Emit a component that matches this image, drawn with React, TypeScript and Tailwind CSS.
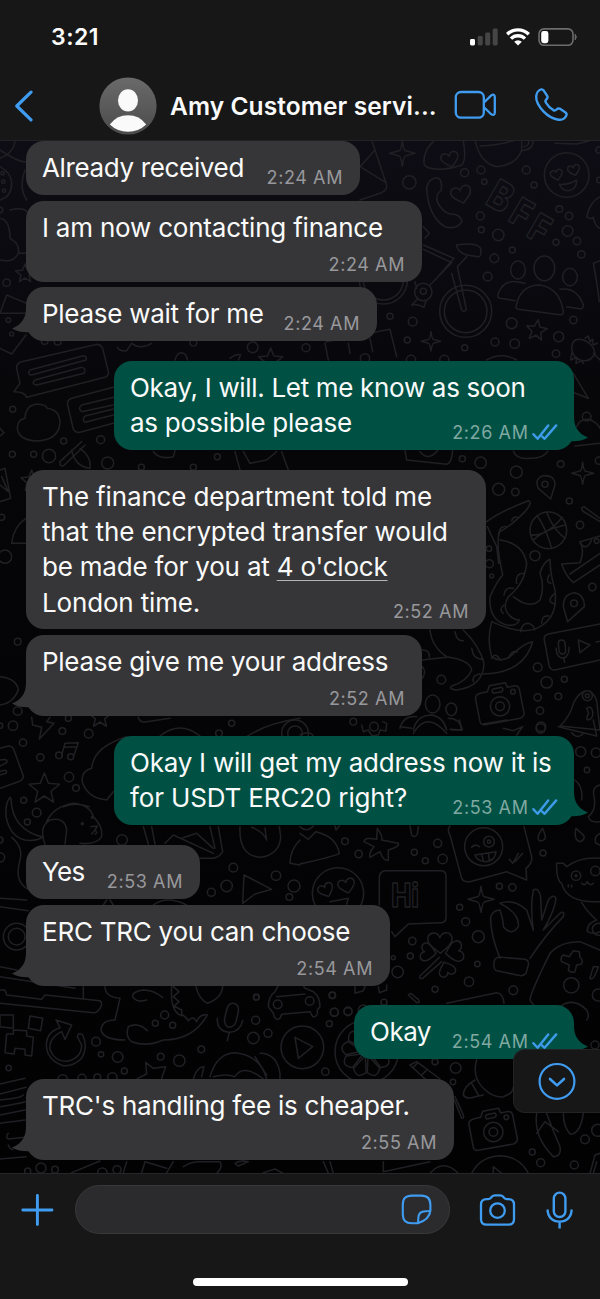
import React from "react";

type Pt = [number, number, number];

function Dots({ items }: { items: Pt[] }) {
  return (
    <>
      {items.map(([x, y, r], i) => (
        <circle key={i} cx={x} cy={y} r={r} />
      ))}
    </>
  );
}

function Panel({ x, y, children }: { x: number; y: number; children: React.ReactNode }) {
  return <g transform={`translate(${x} ${y}) scale(0.33333)`}>{children}</g>;
}

function Heart({ x, y, s, r = -15 }: { x: number; y: number; s: number; r?: number }) {
  const k = s / 30;
  return (
    <path
      transform={`translate(${x} ${y}) rotate(${r}) scale(${k})`}
      strokeWidth={4.6 / k}
      d="M0 26C-15 14 -30 4 -29 -9C-27 -26 -6 -27 0 -11C6 -27 27 -26 29 -9C30 4 15 14 0 26Z"
    />
  );
}

function Star({ x, y, s, r = 0 }: { x: number; y: number; s: number; r?: number }) {
  const k = s / 30;
  return (
    <path
      transform={`translate(${x} ${y}) rotate(${r}) scale(${k})`}
      strokeWidth={4.6 / k}
      d="M0 -30L8 -10L30 -8L13 6L18 27L0 15L-18 27L-13 6L-30 -8L-8 -10Z"
    />
  );
}

function Sparkle({ x, y, s }: { x: number; y: number; s: number }) {
  const k = s / 30;
  return (
    <path
      transform={`translate(${x} ${y}) scale(${k})`}
      strokeWidth={4.6 / k}
      d="M0 -30Q3 -6 8 -6L30 0L8 6Q4 6 0 30Q-4 6 -8 6L-30 0L-8 -6Q-3 -6 0 -30Z"
    />
  );
}

function DoodleCamera({ x, y }: { x: number; y: number }) {
  return (
    <g transform={`translate(${x - 300} ${y - 829})`}>
      <path d="M240 790Q224 796 227 808L240 875Q243 886 255 884L360 865Q373 860 372 848L358 778Q355 765 340 768L322 772L316 758L268 767L262 785Z" />
      <path d="M280 777L305 772Q312 778 305 785L280 790Q273 782 280 777Z" />
      <Dots items={[[300, 829, 29], [300, 829, 13], [339, 785, 7]]} />
    </g>
  );
}

function Letter({ x, y, size, rotate, children }: { x: number; y: number; size: number; rotate: number; children: string }) {
  return (
    <text
      transform={`translate(${x} ${y}) rotate(${rotate}) scale(0.82 1)`}
      textAnchor="middle"
      dominantBaseline="central"
      fontFamily="Inter, sans-serif"
      fontWeight="800"
      fontSize={size}
    >
      {children}
    </text>
  );
}

function Wallpaper() {
  return (
    <svg
      className="absolute inset-0 h-full w-full"
      viewBox="0 141 600 1032"
      preserveAspectRatio="none"
      fill="none"
      stroke="#202024"
      strokeWidth="4.6"
      strokeLinecap="round"
      strokeLinejoin="round"
      aria-hidden="true"
    >
      <Panel x={0} y={130}>
        <path d="M45 35Q40 70 0 85M0 60Q60 100 80 95M0 110Q35 130 35 160Q35 200 0 210M75 120Q55 170 80 210M0 265Q30 270 30 325Q60 340 55 370Q40 400 0 390M30 240Q70 230 80 245M55 370L80 370" />
        <Dots items={[[8, 130, 5], [10, 155, 5], [12, 182, 5], [0, 240, 8]]} />
      </Panel>
      <Panel x={300} y={130}>
        <Dots
          items={[
            [328, 157, 20], [494, 128, 12], [543, 120, 12], [553, 155, 8], [679, 120, 12], [702, 165, 9], [541, 258, 12], [544, 299, 9],
            [595, 315, 17], [583, 385, 13], [637, 360, 9], [563, 440, 13], [778, 237, 10], [807, 258, 11], [803, 303, 16], [768, 337, 9],
            [831, 333, 11], [844, 373, 11], [270, 559, 9], [338, 575, 13], [322, 630, 9], [494, 653, 9], [585, 636, 12], [644, 641, 14],
            [635, 580, 16], [820, 570, 11], [776, 620, 15], [768, 671, 11], [333, 690, 14], [433, 690, 14], [195, 685, 14], [18, 653, 12],
            [800, 135, 67], [497, 544, 78], [497, 544, 64], [250, 450, 72], [250, 450, 60], [370, 484, 9], [370, 486, 26], [898, 60, 10],
            [898, 150, 8], [860, 860, 13],
          ]}
        />
        <Sparkle x={307} y={70} s={38} />
        <Sparkle x={393} y={634} s={29} />
        <Heart x={450} y={88} s={27} />
        <Heart x={484} y={193} s={31} />
        <Heart x={770} y={134} s={19} />
        <Heart x={822} y={120} s={19} />
        <Star x={710} y={600} s={31} r={8} />
        <path d="M215 30L260 165Q262 180 245 188L180 210M225 60L180 110L258 158" />
        <path d="M372 100Q370 60 400 35M490 35Q500 90 485 105Q430 125 385 113Q372 108 372 100" />
        <path d="M525 30Q540 100 590 110Q650 105 665 60L665 30M540 48Q600 45 640 32M665 62Q700 60 700 30M672 50Q690 45 685 32M765 40L830 42L870 32" />
        <path d="M778 163Q805 165 830 150Q830 180 805 182Q785 182 778 163Z" />
        <path d="M380 175Q385 145 410 143Q428 145 424 180Q405 195 412 215Q425 245 450 252Q480 250 486 275Q470 300 435 290Q385 260 380 175Z" />
        <path d="M370 345L462 385L405 450M370 358L455 398L390 465M455 430L485 540Q493 548 499 538L472 410L500 380M470 345Q530 335 542 355Q545 380 535 380L500 375Q470 365 470 345ZM355 505L335 525Q350 520 372 532L378 512M345 455L350 475M370 290L388 310L375 325" />
        <ellipse cx="654" cy="420" rx="22" ry="27" />
        <ellipse cx="733" cy="415" rx="31" ry="37" />
        <ellipse cx="810" cy="441" rx="22" ry="26" />
        <path d="M648 530Q660 465 720 465Q780 475 790 545Q790 555 780 554L655 538Q646 536 648 530ZM645 512L600 505Q590 505 595 490Q610 450 650 455L675 460M780 478Q830 470 850 525Q850 538 840 536L800 530" />
        <path d="M75 640L85 690M78 635L270 598L290 680M145 640L150 670M210 625L218 665M560 690Q605 665 650 690" />
        <path d="M815 650Q820 620 850 630Q880 640 885 670Q870 700 840 690Q815 680 815 650ZM880 670L900 690M855 625L865 618L870 635L878 628L880 645L892 640M815 670L812 690L830 682L828 700L845 692L850 700M820 730L865 805L800 780M830 890Q840 865 865 868Q890 875 900 895" />
        <path d="M900 200Q870 215 860 260Q870 270 880 262Q885 290 900 295M900 392L880 400Q890 450 898 515" />
        <Letter x={603} y={198} size={122} rotate={30}>B</Letter>
        <Letter x={666} y={247} size={114} rotate={30}>F</Letter>
        <Letter x={720} y={293} size={114} rotate={30}>F</Letter>
      </Panel>
      <Panel x={0} y={260}>
        <Dots
          items={[
            [38, 448, 9], [37, 583, 9], [101, 583, 9], [147, 588, 20], [191, 543, 9], [302, 539, 12], [323, 609, 18], [424, 622, 9],
            [580, 622, 9], [652, 590, 9], [758, 262, 16], [20, 68, 11], [25, 180, 7], [35, 222, 6], [134, 243, 10], [173, 245, 10],
            [580, 248, 10], [5, 772, 9], [15, 890, 20],
          ]}
        />
        <Star x={75} y={40} s={28} />
        <Star x={812} y={300} s={36} />
        <Star x={95} y={662} s={32} />
        <path d="M20 105L0 160M20 105L80 130M0 160L75 160M0 265L35 282L78 225M0 505L12 518L0 528" />
        <path d="M65 305Q48 310 50 325L60 370L42 395Q75 395 80 412L315 352Q328 345 325 335L308 265Q300 250 285 254ZM90 330L250 287Q262 288 258 300L95 345Q80 343 90 330ZM105 360L245 322Q260 325 252 340L110 375Q92 372 105 360Z" />
        <path d="M340 382L215 415Q200 420 203 435L220 508Q228 520 240 517L340 490M340 412L245 435Q232 445 245 455L340 435M340 447L255 468Q245 478 255 487L340 465" />
        <path d="M75 475Q75 440 105 433Q135 430 142 445Q180 450 180 490Q175 540 110 543Q55 540 52 505Q52 480 75 475Z" />
        <path d="M245 545L180 605Q178 620 190 618L255 555M215 570Q225 620 270 625Q275 590 240 565M0 630L15 625L32 715L0 725M0 675L25 695L5 650M35 850Q40 800 78 775M78 850L35 850" />
        <path d="M352 262Q360 275 380 272L395 250M395 250Q420 270 455 250M525 300Q530 278 545 278Q560 280 562 300M690 295Q710 280 722 285L715 300M705 575L720 630M730 575L750 610L800 600L830 575M845 575L865 630M460 575Q480 600 520 590L525 572" />
      </Panel>
      <Panel x={400} y={430}>
        <Dots
          items={[
            [187, 86, 9], [242, 98, 17], [349, 126, 18], [296, 178, 18], [346, 186, 11], [482, 102, 10], [508, 213, 9], [540, 285, 11],
            [405, 377, 15], [268, 401, 12], [267, 356, 8], [275, 438, 6], [577, 471, 11], [413, 712, 13], [440, 757, 17], [493, 748, 9],
            [413, 802, 11], [475, 799, 10], [420, 842, 11], [423, 890, 14], [124, 749, 13], [435, 163, 9], [522, 520, 10], [445, 301, 55],
            [562, 797, 15], [562, 797, 6], [597, 92, 11], [590, 333, 7],
          ]}
        />
        <Sparkle x={548} y={130} s={33} />
        <path d="M15 62L20 90L140 103Q155 100 158 62M60 65Q85 95 112 62M340 64Q350 90 390 85Q430 85 443 64M525 48L600 40" />
        <path d="M452 207L415 175Q402 145 430 137Q465 135 465 165ZM503 575L490 530Q490 490 525 488Q555 495 553 530Z" />
        <path d="M392 315Q440 320 487 262M412 257Q440 300 455 355M440 247Q460 300 495 325M400 330Q430 300 495 285" />
        <path d="M260 275Q300 245 385 212Q400 215 375 245Q330 290 300 305Q285 330 308 435Q290 455 270 500Q265 570 320 585Q350 590 358 570M262 290L290 350L296 400M300 330Q370 340 380 400Q375 460 325 500Q310 525 320 545Q335 570 358 570M340 500Q390 540 420 510Q435 470 420 430Q430 395 450 388Q450 430 465 480Q475 560 420 590Q370 620 275 575Q260 630 275 680Q300 700 330 680Q370 640 398 635Q370 730 250 732" />
        <path d="M295 315Q300 285 320 290M350 460Q345 430 372 430M312 495Q315 470 340 475M465 522Q435 515 465 490M362 605Q365 580 385 580Q402 585 404 600M425 580Q425 555 447 558M310 550Q295 540 312 525M275 685Q285 665 300 688M325 685Q335 660 352 665M335 272Q340 258 352 262M452 460Q435 455 448 435" />
        <path d="M90 600Q95 650 140 680Q210 690 215 720Q200 755 155 768Q145 778 170 780Q250 770 252 700Q240 650 190 600M67 690L140 682M165 605Q170 635 190 632M215 655Q220 690 250 688M220 755Q215 735 240 732M67 660Q90 660 88 682M67 710Q80 725 67 745" />
        <path d="M485 402L540 398Q555 360 540 335L600 318M485 402Q495 435 520 458L600 405M510 432L600 370M540 340Q560 365 575 330M600 265L552 230Q540 232 548 243L600 275" />
        <path d="M445 612Q430 617 433 630L448 710Q455 722 465 720L600 690M445 612L600 582M475 640Q475 630 484 630Q494 630 495 640L497 660Q497 672 488 672Q478 672 477 660ZM468 655Q470 685 490 684Q508 680 507 652M491 684L494 697M535 630L570 645L540 668ZM588 636L600 634" />
        <DoodleCamera x={300} y={829} />
        <path d="M480 888Q510 860 520 820Q535 790 555 783M570 783Q592 800 592 830L600 900L480 888M560 835Q575 825 578 845Q580 870 562 870Q558 860 566 850Z" />
        <ellipse cx="98" cy="822" rx="22" ry="27" />
        <ellipse cx="154" cy="838" rx="16" ry="19" />
        <path d="M40 900Q50 855 95 855Q130 860 140 900M145 865Q180 865 187 900L150 898M0 895Q10 855 50 860" />
      </Panel>
      <Panel x={0} y={640}>
        <Dots
          items={[
            [53, 213, 13], [39, 257, 14], [0, 257, 8], [187, 273, 10], [266, 281, 13], [69, 308, 11], [121, 352, 11], [207, 411, 14],
            [228, 444, 10], [71, 481, 9], [110, 518, 13], [82, 546, 9], [366, 600, 16], [700, 683, 13], [680, 738, 17], [634, 757, 12],
            [828, 707, 14], [868, 771, 10], [882, 738, 18], [695, 250, 9], [657, 280, 10], [205, 235, 9], [53, 5, 10], [177, 346, 10],
            [212, 350, 9], [247, 551, 3], [277, 532, 3], [50, 890, 40], [50, 890, 25], [0, 600, 9], [0, 652, 14], [885, 280, 40], [885, 280, 22],
          ]}
        />
        <Star x={300} y={230} s={32} />
        <Star x={133} y={445} s={46} />
        <path d="M0 110Q50 115 55 150Q40 190 0 195M95 232L98 255L125 262L118 297L162 250L140 245L150 232M185 345L195 310L235 308L222 345M195 322L230 320" />
        <path d="M0 325L25 318Q38 318 42 330L70 408Q70 420 55 425L0 445M0 360Q25 355 20 368L0 378M0 395Q25 385 18 400L0 405M415 232Q420 250 440 245L510 235M740 290Q800 250 900 235" />
        <path d="M380 290Q280 320 275 385Q240 395 248 430Q265 475 320 480L340 455M480 288Q540 240 600 288" />
        <path d="M30 472Q15 490 18 530Q30 590 75 600Q110 605 130 590M33 475Q35 570 130 592M195 612L200 570Q195 530 150 540Q115 560 135 612M140 545Q160 500 220 490Q270 495 280 530Q310 560 305 590Q290 615 240 610M35 592Q70 620 60 660Q40 730 90 750M190 500Q230 485 268 500M272 560L292 558L285 570Q295 580 285 582M285 570L275 582" />
        <path d="M430 560L445 612M455 560L465 612M495 610L520 585L640 640M545 595L590 580L640 625M655 560L668 635Q660 650 640 655L600 655M630 560L645 625M720 560Q715 650 785 652Q840 640 842 590L838 560M755 562Q790 575 800 600L795 565M900 600Q870 630 870 670L900 675" />
        <path d="M732 705L815 748L765 762L728 790ZM0 775L80 780M0 800L85 812M320 780L310 795M330 780L340 795M460 795Q500 765 560 795" />
      </Panel>
      <Panel x={300} y={720}>
        <Dots
          items={[
            [222, 20, 13], [160, 5, 10], [722, 25, 14], [842, 95, 15], [888, 98, 14], [861, 150, 8], [135, 364, 10], [176, 402, 11],
            [343, 397, 9], [376, 422, 9], [413, 370, 12], [428, 417, 14], [729, 399, 9], [598, 499, 9], [637, 502, 11], [479, 562, 9],
            [497, 605, 12], [535, 650, 18], [337, 663, 11], [331, 708, 9], [293, 756, 17], [532, 732, 8], [507, 785, 14], [405, 808, 9],
            [640, 811, 13], [814, 796, 23], [97, 826, 10], [103, 877, 12], [144, 875, 12], [190, 870, 15], [895, 825, 18], [280, 713, 6],
            [551, 380, 57], [567, 365, 16], [567, 365, 5], [114, 520, 77], [828, 467, 14], [886, 453, 14], [828, 467, 3], [895, 628, 18],
          ]}
        />
        <path d="M185 15L190 35L205 30L215 47L235 45L240 30L258 33L260 10L248 5M300 20L335 25M340 40Q380 -30 440 40M455 30L485 30L478 0M550 12L620 0M610 25L640 32L668 20L650 45M775 20L890 48L880 0M815 38Q835 60 850 40M0 45Q30 30 40 48M825 180Q850 200 845 240M900 195Q875 200 882 230Q890 270 865 290Q870 310 900 305" />
        <path d="M0 340L25 358L48 335Q110 350 118 400Q100 410 0 432M105 318L108 330L118 318M0 320Q20 340 40 318" />
        <path d="M232 325Q250 350 245 360L295 370Q300 380 265 390L265 420Q250 425 240 395L210 412Q205 400 222 380L192 365Q195 350 230 358ZM330 318L335 345Q345 355 352 342L355 320" />
        <path d="M450 318Q440 330 450 345L485 475Q490 488 510 485L620 455L680 480L678 445Q698 430 695 410L672 320M515 382Q525 370 538 380M525 405L588 395Q585 425 555 425Q530 422 525 405M545 403L550 422M565 400L568 420M628 418L638 430L655 400M645 425L668 400" />
        <path d="M728 325Q705 355 720 363Q740 362 735 345ZM828 325Q820 360 840 365Q858 358 850 345ZM900 340Q880 350 888 370L900 375" />
        <Heart x={78} y={510} s={24} r={-25} />
        <Heart x={140} y={497} s={26} />
        <path d="M90 545L145 535L140 552M255 452H425Q438 454 438 468V595Q436 608 422 608L325 612L285 650L275 635M238 555V470Q240 454 255 452" />
        <path d="M790 430L770 430Q768 480 785 490Q800 550 900 545M790 430L800 440Q840 410 900 415M845 548Q865 580 890 600Q860 610 862 635Q880 645 900 635M845 490Q855 500 862 485Q870 500 880 490M805 495v6M815 495v6" />
        <Sparkle x={543} y={538} s={39} />
        <path d="M600 715Q570 640 572 590Q580 570 600 570Q610 600 610 620Q635 650 655 620Q660 580 600 550Q640 535 680 570L700 630Q690 560 700 510Q715 500 722 530L725 600L745 540Q760 520 768 535Q765 570 730 630L780 580Q795 570 790 590Q740 640 690 715M583 722Q590 708 605 712L675 718Q688 722 685 735L678 760Q670 770 655 766L590 752Q578 748 583 722" />
        <Heart x={420} y={667} s={38} r={-2} />
        <Heart x={384} y={697} s={28} r={-80} />
        <Heart x={464} y={695} s={32} r={78} />
        <Heart x={440} y={748} s={26} r={160} />
        <path d="M418 712L360 768Q355 778 368 775L425 725" />
        <path d="M690 840Q690 820 750 700Q780 665 840 665L900 690M690 840Q700 860 720 865M780 860Q820 830 860 870Q870 890 860 900M820 692L838 695L840 712Q850 718 845 732L830 735L825 755Q812 760 805 750L808 735L785 725Q780 710 790 705L808 710ZM880 740L870 775Q880 785 895 740Z" />
        <path d="M325 825L350 848Q362 850 355 838L332 820ZM440 850L590 818Q610 820 612 850M165 800V820L190 812L195 800M235 800L238 818L260 810V795" />
        <Letter x={315} y={525} size={98} rotate={0}>Hi</Letter>
      </Panel>
      <Panel x={0} y={960}>
        <Dots
          items={[
            [466, 190, 9], [494, 165, 12], [518, 196, 9], [288, 245, 13], [303, 283, 8], [353, 291, 16], [373, 333, 9], [482, 290, 10],
            [538, 302, 17], [604, 268, 10], [760, 234, 17], [767, 181, 12], [804, 220, 12], [769, 112, 8], [26, 324, 8], [246, 355, 12],
            [292, 352, 10], [337, 352, 14], [188, 358, 14], [123, 624, 15], [83, 633, 9], [165, 629, 10], [307, 638, 14], [351, 629, 12],
          ]}
        />
        <path d="M0 50L225 85M0 90L15 90L20 105L125 118L135 105L300 122Q310 130 300 145Q290 160 280 158L0 130M250 80V115M0 20L50 30" />
        <path d="M0 165L40 165L40 205L0 200ZM90 168L128 175L122 212L85 205ZM40 210L80 212L80 228L100 232L95 288L75 285L75 268L45 265L42 282L15 278L20 222L40 222Z" />
        <path d="M168 180L215 195L195 238L185 215Q145 235 150 270Q165 305 200 304Q245 295 245 255L232 230Q235 215 248 225Q265 260 245 295Q220 320 190 317Q140 300 139 255Q140 215 180 203Z" />
        <path d="M315 80Q315 110 360 115L345 180Q305 180 303 210Q310 240 375 240M488 112Q460 90 430 90Q395 95 398 110Q410 130 440 120M442 212Q415 185 385 200Q375 230 395 245Q440 262 490 240Q580 240 622 165Q600 160 590 185Q580 165 565 182Q550 160 540 165Q510 150 515 80M520 80L537 95L520 110L537 125L522 138L545 150L545 168M588 80Q595 115 622 130Q665 115 668 80" />
        <path d="M680 150Q685 128 700 130Q718 133 715 155L708 185Q700 205 682 200Q670 190 675 170ZM652 175Q650 215 690 217Q720 215 728 182M688 217L682 242" />
        <path d="M412 355L440 342L437 307L460 325L497 320L485 355M580 357Q590 320 612 320L605 350M630 350Q650 280 705 278Q780 285 800 357M640 350Q680 340 705 350Q730 310 790 357M765 290Q790 330 800 345M780 280Q830 280 840 340V357" />
        <path d="M0 372L75 355M0 402L78 382M25 520Q15 530 25 537L75 532M0 420Q60 415 70 405M0 440Q60 430 75 425M0 465L75 450M0 490L75 480M25 555Q30 570 40 568M0 597L78 590M215 638L300 603M380 605L370 638M435 605L425 638M520 605L500 638M435 605L500 625M550 620Q570 605 600 605L660 605Q670 620 650 640M705 610Q720 600 745 605L715 618ZM790 638L825 627L850 640" />
      </Panel>
      <Panel x={190} y={820}>
        <Dots
          items={[
            [263, 553, 13], [359, 543, 13], [199, 531, 9], [427, 526, 9], [433, 577, 12], [474, 573, 12], [418, 611, 9], [582, 547, 9],
            [406, 755, 11], [337, 682, 64],
          ]}
        />
        <path d="M235 560Q235 530 255 515L265 497M390 560Q390 530 370 515L345 505L340 497M260 530L345 522M235 560L250 580Q255 605 270 595L275 583L360 575L368 590Q385 592 382 570L390 560M315 652L368 680L325 715Z" />
      </Panel>
      <Panel x={300} y={980}>
        <Dots
          items={[
            [467, 264, 16], [459, 306, 8], [697, 516, 9], [722, 548, 12], [823, 555, 12], [855, 478, 13], [893, 451, 18], [200, 215, 95],
            [885, 195, 12], [405, 245, 9],
          ]}
        />
        {[0, 40, 80, 120, 160, 200, 240, 280, 320].map((a) => (
          <path key={a} transform={`translate(200 215) rotate(${a})`} d="M0 -12L-20 -60Q0 -90 20 -60Z" />
        ))}
        <path d="M330 255L400 320M350 245L420 297M340 262L352 250M365 285L378 272M330 255L350 245M463 360L485 415Q495 415 488 400L465 350" />
        <path d="M530 240Q515 290 550 325Q580 355 610 350Q640 340 640 320M525 300Q490 320 490 345Q500 360 525 350L550 345M515 310L535 345" />
        <DoodleCamera x={580} y={456} />
        <path d="M710 400Q700 470 760 530Q785 530 780 500Q750 430 740 400M710 460L735 425L775 455M790 400Q790 440 810 462Q840 465 850 400" />
        <path d="M250 545L250 575L390 545M70 545L85 580M90 545L100 580M390 580Q430 535 475 580M515 580Q540 530 600 527Q660 530 685 580M580 560V580M580 560L605 580M870 580L885 525L900 520M890 545L880 580" />
      </Panel>
    </svg>
  );
}

function Ticks() {
  return (
    <svg className="h-[17px] w-[26px]" viewBox="0 0 26 17" fill="none" stroke="#3d9be9" strokeWidth="2.4" strokeLinecap="round" strokeLinejoin="round" aria-hidden="true">
      <path d="M1.4 10.2L5.6 14.8L16.2 1.4M10.2 12.6L12.6 14.8L24.2 1.4" />
    </svg>
  );
}

type Line = { text: string; track: string; mark?: string };

interface Message {
  mine?: boolean;
  tail?: boolean;
  box: string;
  lines: Line[];
  time: string;
}

const messages: Message[] = [
  { box: "w-[334px] h-[54px]", lines: [{ text: "Already received", track: "tracking-[-0.35px]" }], time: "2:24 AM" },
  { box: "mt-[6px] w-[396px] h-[81px]", lines: [{ text: "I am now contacting finance", track: "tracking-[-0.21px]" }], time: "2:24 AM" },
  { tail: true, box: "mt-[5px] w-[351px] h-[54px]", lines: [{ text: "Please wait for me", track: "tracking-[-0.27px]" }], time: "2:24 AM" },
  {
    mine: true,
    tail: true,
    box: "mt-[20px] w-[460px] h-[89px]",
    lines: [
      { text: "Okay, I will. Let me know as soon", track: "tracking-[-0.32px]" },
      { text: "as possible please", track: "tracking-[-0.27px]" },
    ],
    time: "2:26 AM",
  },
  {
    box: "mt-[20px] w-[460px] h-[159px]",
    lines: [
      { text: "The finance department told me", track: "tracking-[-0.14px]" },
      { text: "that the encrypted transfer would", track: "tracking-[-0.14px]" },
      { text: "be made for you at ", mark: "4 o'clock", track: "tracking-[-0.2px]" },
      { text: "London time.", track: "tracking-[-0.16px]" },
    ],
    time: "2:52 AM",
  },
  { tail: true, box: "mt-[6px] w-[396px] h-[81px]", lines: [{ text: "Please give me your address", track: "tracking-[-0.28px]" }], time: "2:52 AM" },
  {
    mine: true,
    tail: true,
    box: "mt-[20px] w-[460px] h-[89px]",
    lines: [
      { text: "Okay I will get my address now it is", track: "tracking-[-0.24px]" },
      { text: "for USDT ERC20 right?", track: "tracking-[-0.15px]" },
    ],
    time: "2:53 AM",
  },
  { box: "mt-[20px] w-[174px] h-[54px]", lines: [{ text: "Yes", track: "tracking-[-0.6px]" }], time: "2:53 AM" },
  { tail: true, box: "mt-[6px] w-[364px] h-[81px]", lines: [{ text: "ERC TRC you can choose", track: "tracking-[-0.24px]" }], time: "2:54 AM" },
  { mine: true, tail: true, box: "mt-[19px] w-[220px] h-[54px]", lines: [{ text: "Okay", track: "tracking-[-0.5px]" }], time: "2:54 AM" },
  { tail: true, box: "mt-[20px] w-[428px] h-[81px]", lines: [{ text: "TRC's handling fee is cheaper.", track: "tracking-[-0.23px]" }], time: "2:55 AM" },
];

function Bubble({ mine, tail, box, lines, time }: Message) {
  return (
    <div
      className={`relative grid shrink-0 rounded-[18px] pt-[9px] pb-[6px] pl-[16px] ${box} ${
        mine ? "self-end bg-[#005144] pr-[16px]" : "self-start bg-[#363638] pr-[17px]"
      }`}
    >
      {tail && (
        <svg
          className={`absolute bottom-0 h-[34px] w-[34px] ${mine ? "-right-[14px] -scale-x-100" : "-left-[14px]"}`}
          viewBox="0 0 34 34"
          fill={mine ? "#005144" : "#363638"}
          aria-hidden="true"
        >
          <path d="M14 0C14 10 11 17 0 21.5C5 25 12 25.5 18 25.2L32 34V0Z" />
        </svg>
      )}
      <div className="relative col-start-1 row-start-1 text-[26px] leading-[35.2px] whitespace-pre text-[#fafafa]">
        {lines.map((l) => (
          <p key={l.text} className={l.track}>
            {l.text}
            {l.mark && <span className="underline decoration-[#b4b4b6] decoration-1 underline-offset-[4px]">{l.mark}</span>}
          </p>
        ))}
      </div>
      <div
        className={`relative col-start-1 row-start-1 flex items-end gap-[3.5px] self-end justify-self-end text-[18px] leading-[22px] tracking-[0.6px] whitespace-nowrap ${
          mine ? "text-[#7fa8a1]" : "text-[#98989c]"
        }`}
      >
        <span>{time}</span>
        {mine && (
          <div className="flex pb-[3px]">
            <Ticks />
          </div>
        )}
      </div>
    </div>
  );
}

function StatusBar() {
  return (
    <div className="flex h-[74px] items-center justify-between pr-[22px] pl-[51px]">
      <span className="text-[23px] leading-[28px] font-semibold tracking-[0.5px]">3:21</span>
      <div className="flex items-center gap-[8px]">
        <svg className="h-[18px] w-[28px]" viewBox="0 0 28 18" aria-hidden="true">
          <rect x="0" y="11" width="5" height="6.5" rx="1.4" fill="#fff" />
          <rect x="7.7" y="8" width="5" height="9.5" rx="1.4" fill="#454545" />
          <rect x="15.2" y="4.5" width="5" height="13" rx="1.4" fill="#454545" />
          <rect x="22.7" y="0.5" width="5" height="17" rx="1.4" fill="#454545" />
        </svg>
        <svg className="h-[18px] w-[24px]" viewBox="0 0 24 18" fill="none" stroke="#fff" strokeWidth="3.4" aria-hidden="true">
          <path d="M1.2 6.3A15.4 15.4 0 0 1 22.8 6.3" />
          <path d="M5 10.6A10 10 0 0 1 19 10.6" />
          <path d="M12 17.6L8.2 13.8A5.4 5.4 0 0 1 15.8 13.8Z" fill="#fff" stroke="none" />
        </svg>
        <svg className="h-[18px] w-[40px]" viewBox="0 0 40 18" fill="none" aria-hidden="true">
          <rect x="1" y="0.9" width="34" height="16.4" rx="5" stroke="#6c6c6c" strokeWidth="1.6" />
          <rect x="3.2" y="3" width="7.2" height="12.2" rx="2.4" fill="#fff" />
          <path d="M37.2 6.3Q39.4 9 37.2 11.8Z" fill="#6c6c6c" stroke="#6c6c6c" />
        </svg>
      </div>
    </div>
  );
}

function ChatHeader() {
  return (
    <div className="flex h-[63px] items-center">
      <svg className="ml-[13px] h-[32px] w-[22px]" viewBox="0 0 22 32" fill="none" stroke="#3f9cf0" strokeWidth="3.2" strokeLinecap="round" strokeLinejoin="round" aria-hidden="true">
        <path d="M18 2.2L3.8 16L18 29.8" />
      </svg>
      <svg className="ml-[64px] h-[58px] w-[58px]" viewBox="0 0 58 58" aria-hidden="true">
        <defs>
          <linearGradient id="avatarFill" x1="0" y1="0" x2="0" y2="1">
            <stop offset="0" stopColor="#6a6a6a" />
            <stop offset="1" stopColor="#4b4b4b" />
          </linearGradient>
        </defs>
        <circle cx="29" cy="29" r="28.6" fill="url(#avatarFill)" />
        <ellipse cx="29" cy="23.4" rx="10" ry="11.2" fill="#fafafa" />
        <path d="M10.8 47.5Q17.5 38.3 29 38.3T47.2 47.5Q39.5 54.8 29 54.8T10.8 47.5Z" fill="#fafafa" />
      </svg>
      <h1 className="ml-[13px] w-[284px] text-[24.5px] leading-[32px] font-semibold tracking-[0.1px] whitespace-nowrap">Amy Customer servi...</h1>
      <svg className="h-[30px] w-[44px] -translate-y-px" viewBox="0 0 44 30" fill="none" stroke="#3f9cf0" strokeWidth="2.3" strokeLinejoin="round" aria-hidden="true">
        <rect x="1.8" y="2" width="28" height="25.6" rx="5.2" />
        <path d="M30 12.5L37.2 5.4Q40.6 3.4 40.8 7V22.8Q40.6 26 37.2 24.2L30 17.2" />
      </svg>
      <svg className="ml-[36px] h-[36px] w-[36px] -translate-y-[1.5px]" viewBox="0 0 36 36" fill="none" stroke="#3f9cf0" strokeWidth="2.4" strokeLinejoin="round" aria-hidden="true">
        <path d="M2.2 9.6C2.5 6.2 4.8 3.4 7.2 2.9C8.4 2.7 9.2 3.3 9.9 4.3L13.2 9.4C14 10.7 13.6 11.7 12.4 12.9C11.2 14 11 14.6 11.8 16C13.6 19 16.2 21.7 19.3 23.6C20.7 24.4 21.4 24.1 22.5 23C23.6 21.9 24.6 21.5 26 22.3L31.2 25.7C32.5 26.6 33 27.5 32.4 28.9C31.1 32 28 33.6 24.6 33.2C19 32.5 13.6 29.3 9.2 24.6C4.8 19.8 1.9 14.6 2.2 9.6Z" />
      </svg>
    </div>
  );
}

function Composer() {
  return (
    <footer className="flex h-[126px] shrink-0 flex-col items-center border-t border-[#262628] bg-[#171717]">
      <div className="flex h-[71px] w-full items-center">
        <svg className="ml-[21px] h-[34px] w-[34px]" viewBox="0 0 34 34" stroke="#3f9cf0" strokeWidth="2.9" strokeLinecap="round" aria-hidden="true">
          <path d="M16.4 2.4V31.6M1.8 17H31" />
        </svg>
        <div className="ml-[20px] flex h-[49px] w-[375px] items-center justify-end rounded-full border border-[#39393b] bg-[#2b2b2d] pr-[17px]">
          <svg className="h-[31px] w-[31px]" viewBox="0 0 31 31" fill="none" stroke="#3f9cf0" strokeWidth="2.1" strokeLinejoin="round" aria-hidden="true">
            <path d="M16.8 29.2H11C4.6 29.2 1.8 26.4 1.8 20V10.8C1.8 4.4 4.6 1.6 11 1.6H20.2C26.6 1.6 29.4 4.4 29.4 10.8V16.6Q28.5 25.5 16.8 29.2Z" />
            <path d="M16.8 29.2Q17.3 27.6 17.3 24.4C17.3 19.4 19.6 17.2 24.4 17.2Q28 17.2 29.4 16.6" />
          </svg>
        </div>
        <svg className="ml-[29px] h-[34px] w-[37px]" viewBox="0 0 37 34" fill="none" stroke="#3f9cf0" strokeWidth="2.3" strokeLinejoin="round" aria-hidden="true">
          <path d="M7.6 6.2H9.2C10.4 6.2 11.2 5.7 12 4.8L13 3.6C13.8 2.7 14.6 2.3 15.8 2.3H21.2C22.4 2.3 23.2 2.7 24 3.6L25 4.8C25.8 5.7 26.6 6.2 27.8 6.2H29.4C33 6.2 35 8.2 35 11.6V26.2C35 29.6 33 31.6 29.4 31.6H7.6C4 31.6 2 29.6 2 26.2V11.6C2 8.2 4 6.2 7.6 6.2Z" />
          <circle cx="18.5" cy="17.6" r="7.3" />
        </svg>
        <svg className="ml-[29px] h-[40px] w-[30px]" viewBox="0 0 30 40" fill="none" stroke="#3f9cf0" strokeWidth="2.4" aria-hidden="true">
          <rect x="8.8" y="2.6" width="11.6" height="24.4" rx="5.8" />
          <path d="M2.6 19.6C2.6 27 7.4 31.6 14.6 31.6C21.8 31.6 26.6 27 26.6 19.6M14.6 31.6V38.4" />
        </svg>
      </div>
      <div className="mt-[33px] h-[8px] w-[215px] rounded-full bg-white" />
    </footer>
  );
}

export default function App() {
  return (
    <div className="flex h-[1299px] w-[600px] flex-col overflow-hidden bg-[#171717] font-['Inter',sans-serif] text-[#fafafa]">
      <header className="h-[141px] shrink-0 border-b border-[#222224] bg-[#171717]">
        <StatusBar />
        <ChatHeader />
      </header>
      <main className="relative flex h-[1032px] shrink-0 flex-col overflow-hidden bg-linear-to-b from-[#0e0d15] via-[#060608] via-30% to-[#020203]">
        <Wallpaper />
        <div className="relative flex flex-col pr-[26px] pl-[26px]">
          {messages.map((m, i) => (
            <Bubble key={i} {...m} />
          ))}
        </div>
        <button
          type="button"
          aria-label="Scroll to latest"
          className="absolute top-[908px] right-0 flex h-[64px] w-[87px] items-center justify-center rounded-l-[12px] border border-r-0 border-[#232325] bg-[#171717]"
        >
          <svg className="h-[40px] w-[40px]" viewBox="0 0 40 40" fill="none" stroke="#3f9cf0" strokeWidth="2.2" strokeLinecap="round" strokeLinejoin="round" aria-hidden="true">
            <circle cx="20" cy="20.4" r="17.4" />
            <path d="M13 18L20 24.4L27 18" strokeWidth="2.6" />
          </svg>
        </button>
      </main>
      <Composer />
    </div>
  );
}
